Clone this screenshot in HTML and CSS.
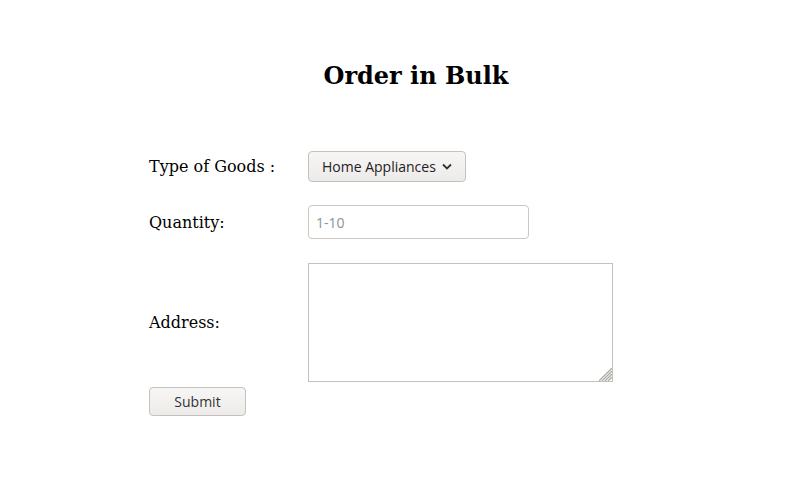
FILE: index.html
```html
<!DOCTYPE html>
<html>
<head>
<meta charset="utf-8">
<link rel="stylesheet" href="styles.css">
</head>
<body>
<div class="page">
  <h1 class="title">Order in Bulk</h1>
  <form class="order-form">
    <div class="row">
      <label class="label">Type of Goods :</label>
      <div class="select">
        <span class="select-text">Home Appliances</span>
        <svg class="chev" width="10" height="7" viewBox="0 0 10 7"><path d="M1 1.5 L5 5.5 L9 1.5" fill="none" stroke="#2e3436" stroke-width="1.8"/></svg>
      </div>
    </div>
    <div class="row">
      <label class="label">Quantity:</label>
      <input class="qty" type="text" placeholder="1-10">
    </div>
    <div class="row">
      <label class="label">Address:</label>
      <div class="addr-wrap">
        <textarea class="addr"></textarea>
        <svg class="grip" width="13" height="13" viewBox="0 0 13 13"><path d="M13 0 L0 13 M13 3 L3 13 M13 6 L6 13 M13 9 L9 13" stroke="#aeaaa5" stroke-width="1.3"/></svg>
      </div>
    </div>
    <div class="actions">
      <button type="button" class="submit">Submit</button>
    </div>
  </form>
</div>
</body>
</html>
```

FILE: styles.css
```css
html, body {
  margin: 0;
  padding: 0;
  background: #ffffff;
}
body {
  font-family: "DejaVu Serif", serif;
  color: #000;
}
.page {
  margin-left: 149px;
  width: 534px;
  padding-top: 60px;
}
.title {
  margin: 0;
  text-align: center;
  font-size: 24px;
  font-weight: bold;
  line-height: 32px;
}
.order-form {
  margin-top: 59px;
  display: flex;
  flex-direction: column;
}
.row {
  display: flex;
  align-items: center;
  margin-bottom: 23px;
}
.row:nth-child(2) {
  margin-bottom: 24px;
}
.row:nth-child(3) {
  margin-bottom: 5px;
}
.label {
  width: 159px;
  font-size: 16px;
}
.select {
  box-sizing: border-box;
  width: 158px;
  height: 31px;
  border: 1px solid #c5c1bc;
  border-radius: 4px;
  background: linear-gradient(#f7f6f5, #edebe9);
  display: flex;
  align-items: center;
  padding-left: 13px;
  gap: 6px;
  font-family: "Open Sans", sans-serif;
  font-size: 14px;
  color: #1e2224;
}
.qty {
  box-sizing: border-box;
  width: 221px;
  height: 34px;
  border: 1px solid #cdc7c2;
  border-radius: 4px;
  padding: 0 7px;
  font-family: "Open Sans", sans-serif;
  font-size: 14px;
  margin: 0;
}
.qty::placeholder {
  color: #8e9293;
}
.addr-wrap {
  position: relative;
  display: flex;
}
.addr {
  box-sizing: border-box;
  width: 305px;
  height: 119px;
  border: 1px solid #c5c1bc;
  margin: 0;
  padding: 2px;
  resize: none;
}
.grip {
  position: absolute;
  right: 1px;
  bottom: 1px;
}
.actions {
  display: flex;
}
.submit {
  box-sizing: border-box;
  width: 97px;
  height: 29px;
  border: 1px solid #c5c1bc;
  border-radius: 4px;
  background: linear-gradient(#f7f6f5, #edebe9);
  font-family: "Open Sans", sans-serif;
  font-size: 14px;
  color: #2e3436;
  margin: 0;
  padding: 0;
}
```
